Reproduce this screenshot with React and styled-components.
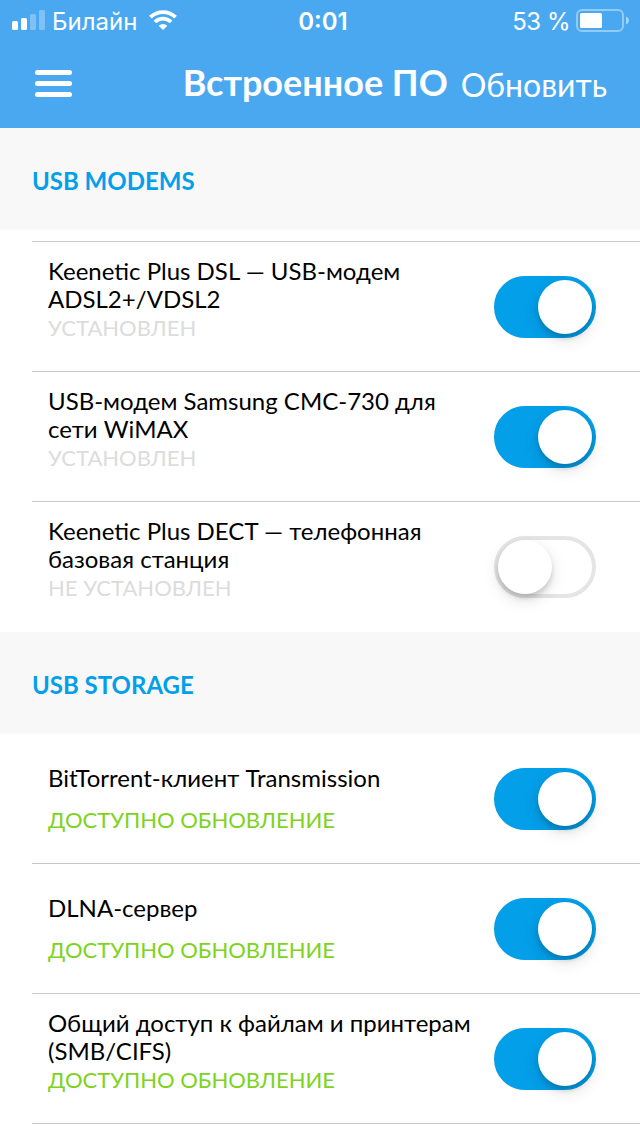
import React, { useState } from 'react';
import styled, { createGlobalStyle } from 'styled-components';

const GlobalStyle = createGlobalStyle`
  * {
    box-sizing: border-box;
  }

  body {
    margin: 0;
    background: #ffffff;
    font-family: Lato, Carlito, sans-serif;
    overflow: hidden;
  }
`;

const sections = [
  {
    title: 'USB MODEMS',
    topLine: true,
    items: [
      { name: 'Keenetic Plus DSL — USB-модем ADSL2+/VDSL2', status: 'УСТАНОВЛЕН', on: true, long: true },
      { name: 'USB-модем Samsung CMC-730 для сети WiMAX', status: 'УСТАНОВЛЕН', on: true, long: true },
      { name: 'Keenetic Plus DECT — телефонная базовая станция', status: 'НЕ УСТАНОВЛЕН', on: false, long: true },
    ],
  },
  {
    title: 'USB STORAGE',
    items: [
      { name: 'BitTorrent-клиент Transmission', status: 'ДОСТУПНО ОБНОВЛЕНИЕ', on: true, update: true },
      { name: 'DLNA-сервер', status: 'ДОСТУПНО ОБНОВЛЕНИЕ', on: true, update: true },
      { name: 'Общий доступ к файлам и принтерам (SMB/CIFS)', status: 'ДОСТУПНО ОБНОВЛЕНИЕ', on: true, update: true, long: true, line: true },
    ],
  },
];

const SignalIcon = () => (
  <svg width="34" height="22" viewBox="0 0 34 22" fill="#fff">
    <rect x="0" y="12" width="6" height="9" rx="1.5" />
    <rect x="9" y="9" width="6" height="12" rx="1.5" />
    <rect x="18" y="5" width="6" height="16" rx="1.5" opacity="0.3" />
    <rect x="27" y="1" width="6" height="20" rx="1.5" opacity="0.3" />
  </svg>
);

const WifiIcon = () => (
  <svg width="28" height="20" viewBox="0 0 28 20" fill="none" stroke="#fff" strokeWidth="3.8">
    <path d="M1.4 7.2 A18 18 0 0 1 26.6 7.2" />
    <path d="M5.9 12 A11.5 11.5 0 0 1 22.1 12" />
    <path d="M14 20 L9.7 15.7 A6.2 6.2 0 0 1 18.3 15.7 Z" fill="#fff" stroke="none" />
  </svg>
);

const BatteryIcon = () => (
  <svg width="54" height="24" viewBox="0 0 54 24">
    <rect x="1" y="2" width="46" height="21" rx="5" fill="none" stroke="#fff" strokeWidth="2" opacity="0.4" />
    <rect x="4" y="5" width="22" height="15" rx="1.5" fill="#fff" />
    <path d="M50 8.5 C54 10 54 15 50 16.5 Z" fill="#fff" opacity="0.5" />
  </svg>
);

const App = () => {
  const [enabled, setEnabled] = useState(() =>
    sections.map((section) => section.items.map((item) => item.on))
  );

  const toggle = (s, i) => {
    setEnabled((prev) =>
      prev.map((list, si) => (si === s ? list.map((v, ii) => (ii === i ? !v : v)) : list))
    );
  };

  return (
    <Screen>
      <GlobalStyle />
      <Header>
        <StatusBar>
          <Carrier>
            <SignalIcon />
            <CarrierName>Билайн</CarrierName>
            <WifiIcon />
          </Carrier>
          <Clock>0:01</Clock>
          <Battery>
            <span>53 %</span>
            <BatteryIcon />
          </Battery>
        </StatusBar>
        <NavBar>
          <MenuButton aria-label="Меню">
            <MenuLine />
            <MenuLine />
            <MenuLine />
          </MenuButton>
          <Title>Встроенное ПО</Title>
          <UpdateButton>Обновить</UpdateButton>
        </NavBar>
      </Header>

      {sections.map((section, s) => (
        <section key={section.title}>
          <SectionTitle>{section.title}</SectionTitle>
          <List $topLine={section.topLine}>
            {section.items.map((item, i) => (
              <Row key={item.name} $line={item.line}>
                <Info>
                  <Name $long={item.long}>{item.name}</Name>
                  <Status $update={item.update}>{item.status}</Status>
                </Info>
                <Switch
                  role="switch"
                  aria-checked={enabled[s][i]}
                  $on={enabled[s][i]}
                  onClick={() => toggle(s, i)}
                >
                  <Knob />
                </Switch>
              </Row>
            ))}
          </List>
        </section>
      ))}
    </Screen>
  );
};

const Screen = styled.div`
  width: 640px;
  height: 1136px;
  overflow: hidden;
  background: #ffffff;
`;

const Header = styled.header`
  height: 128px;
  background: #4aa8f1;
  color: #ffffff;
`;

const StatusBar = styled.div`
  display: grid;
  grid-template-columns: 1fr auto 1fr;
  align-items: center;
  height: 40px;
  padding: 0 10px 0 12px;
  font-family: Inter, sans-serif;
  font-size: 24px;
`;

const Carrier = styled.div`
  display: flex;
  align-items: center;
`;

const CarrierName = styled.span`
  margin: 0 12px 0 6px;
  padding-top: 2px;
`;

const Clock = styled.span`
  font-weight: 600;
  margin-left: 4px;
  padding-top: 2px;
`;

const Battery = styled.div`
  display: flex;
  align-items: center;
  justify-content: flex-end;
  gap: 6px;
  letter-spacing: -0.5px;

  span {
    padding-top: 2px;
  }
`;

const NavBar = styled.div`
  display: flex;
  align-items: center;
  height: 88px;
  padding: 0 33px 0 35px;
`;

const MenuButton = styled.button`
  display: flex;
  flex-direction: column;
  gap: 6px;
  width: 37px;
  margin-bottom: 1px;
  padding: 0;
  border: none;
  background: none;
`;

const MenuLine = styled.span`
  height: 5px;
  border-radius: 3px;
  background: #ffffff;
`;

const Title = styled.h1`
  margin: 0 0 4px auto;
  font-size: 36px;
  line-height: 44px;
  font-weight: 700;
  white-space: nowrap;
`;

const UpdateButton = styled.button`
  margin-left: 13px;
  padding: 1px 0 0;
  border: none;
  background: none;
  color: #ffffff;
  font-family: inherit;
  font-size: 32px;
  line-height: 40px;
`;

const SectionTitle = styled.h2`
  display: flex;
  align-items: center;
  height: 102px;
  margin: 0;
  padding: 2px 32px 0;
  background: #f8f8f8;
  color: #039fe9;
  font-size: 24px;
  font-weight: 700;
`;

const List = styled.div`
  padding-left: 32px;

  ${({ $topLine }) => $topLine && `
    padding-top: 11px;

    &::before {
      content: '';
      display: block;
      height: 1px;
      background: #c8c8c8;
    }
  `}
`;

const Row = styled.div`
  display: flex;
  justify-content: space-between;
  height: 130px;
  padding: 16px 44px 0 16px;
  border-bottom: 1px solid #c8c8c8;

  &:last-child {
    border-bottom-color: ${({ $line }) => ($line ? '#c8c8c8' : 'transparent')};
  }
`;

const Info = styled.div`
  width: 430px;
`;

const Name = styled.div`
  display: flex;
  align-items: center;
  height: 56px;
  padding-bottom: ${({ $long }) => ($long ? '2px' : '0')};
  color: #000000;
  font-size: 24px;
  line-height: 28px;
`;

const Status = styled.div`
  color: ${({ $update }) => ($update ? '#7ed321' : '#dcdcdc')};
  font-size: 22px;
  line-height: 28px;
`;

const Switch = styled.button`
  display: flex;
  justify-content: ${({ $on }) => ($on ? 'flex-end' : 'flex-start')};
  width: 102px;
  height: 62px;
  margin-top: 18px;
  padding: 0;
  border: 4px solid ${({ $on }) => ($on ? '#039fe9' : '#e5e5e5')};
  border-radius: 31px;
  background: ${({ $on }) => ($on ? '#039fe9' : '#ffffff')};
`;

const Knob = styled.span`
  width: 54px;
  height: 54px;
  border-radius: 50%;
  background: #ffffff;
  box-shadow: 0 6px 16px rgba(0, 0, 0, 0.13), 0 4px 5px rgba(0, 0, 0, 0.14);
`;

export default App;
